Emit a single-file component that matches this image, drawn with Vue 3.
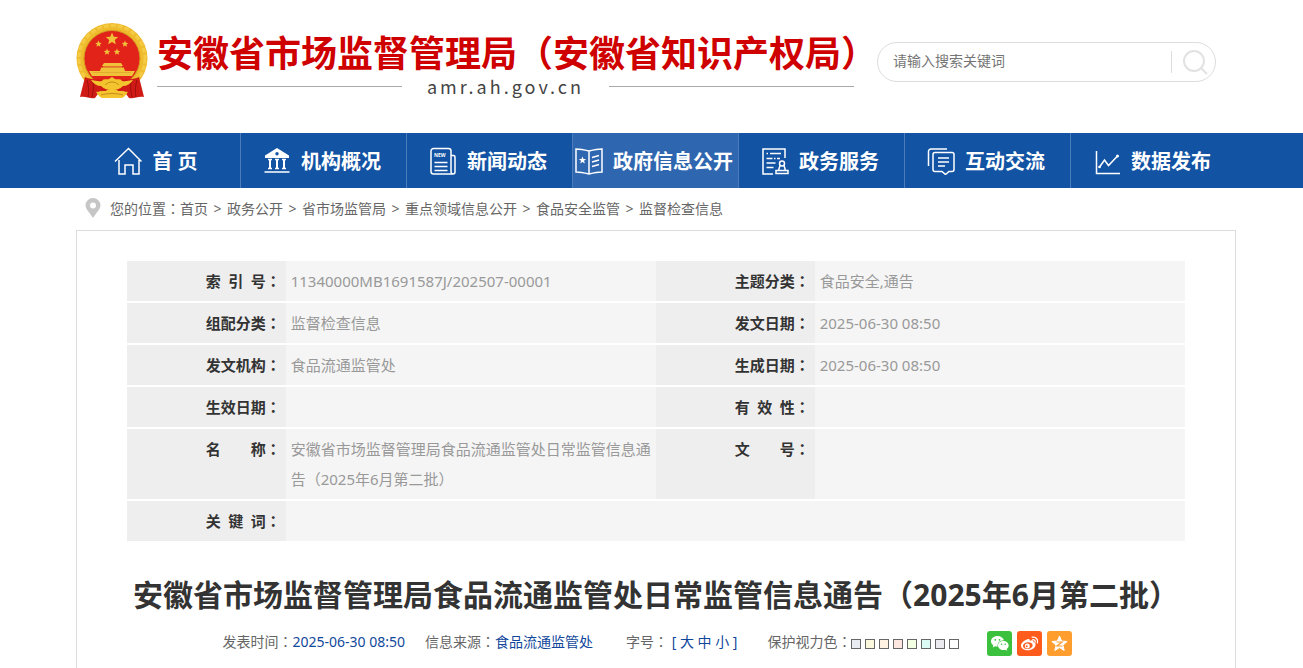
<template>
  <div class="page">
    <header class="wrap header">
      <svg class="emblem" viewBox="0 0 72 78" aria-hidden="true">
        <circle cx="36" cy="36.500" r="35.500" fill="#eebb2c" />
        <circle cx="36" cy="36.500" r="33" fill="none" stroke="#f5cb45" stroke-width="3" stroke-dasharray="5 2" />
        <circle cx="36" cy="36.500" r="28" fill="#e2231a" stroke="#d39a1f" stroke-width="1" />
        <g fill="#f0c23a">
          <polygon :points="star(36, 17, 6.5)" />
          <polygon :points="star(22.5, 22, 3.4)" />
          <polygon :points="star(49, 22, 3.4)" />
          <polygon :points="star(31, 30, 3.4)" />
          <polygon :points="star(41, 30, 3.4)" />
          <path d="M28 41h17l2 3H26zM27 44.500h19v1H27zM25 46h23l1 3h10l-3 5H16l-3-5h11z" />
        </g>
        <path d="M25 45.500h23M17 50.500h38" stroke="#dba02a" stroke-width=".6" />
        <path d="M9 55c6 3 12 2 18 3l9 5 9-5c6-1 12 0 18-3l5 20c-6-1-10 2-15 1l-5-7H24l-5 7c-5 1-9-2-15-1z" fill="#cf1a15" />
        <path d="M11 58c2 7 2 12 1 17M17 60c1 5 0 10-1 15M61 58c-2 7-2 12-1 17M55 60c-1 5 0 10 1 15" fill="none" stroke="#9e0f0f" stroke-width="1" />
        <path d="M15 58c4 0 7 2 11 1 2-3 5-1 7-2l3-2 3 2c2 1 5-1 7 2 4 1 7-1 11-1-3 4-6 6-10 6-3 3-7 4-11 4s-8-1-11-4c-4 0-7-2-10-6z" fill="#f3c42e" />
        <path d="M20 70c4-1 8 1 11-2l5-2 5 2c3 3 7 1 11 2-2 2-3 5-6 6H26c-3-1-4-4-6-6z" fill="#f3c42e" />
        <path d="M29 63c4-4 10-4 14 0M25 73c7-2 15-2 22 0" fill="none" stroke="#c88a18" stroke-width="1" />
      </svg>
      <div class="brand">
        <div class="brand-name">安徽省市场监督管理局（安徽省知识产权局）</div>
        <div class="brand-domain">amr.ah.gov.cn</div>
      </div>
      <form class="search" @submit.prevent>
        <input v-model="keyword" type="text" placeholder="请输入搜索关键词" aria-label="请输入搜索关键词" />
        <button type="submit" aria-label="搜索">
          <svg viewBox="0 0 26 26" fill="none" stroke="#e2e2e2" stroke-width="2">
            <circle cx="12" cy="12" r="10" />
            <path d="M19 19l6 6" />
          </svg>
        </button>
      </form>
    </header>

    <nav class="nav">
      <ul>
        <li v-for="item in navs" :key="item.name">
          <a href="#" :class="{ on: item.active }">
            <svg viewBox="0 0 28 28" aria-hidden="true" v-html="item.icon"></svg>
            <span>{{ item.name }}</span>
          </a>
        </li>
      </ul>
    </nav>

    <div class="wrap crumbs">
      <svg viewBox="0 0 16 20" aria-hidden="true">
        <path d="M8 0a7.500 7.500 0 0 1 7.500 7.500C15.500 11 11 15 8 20 5 15 .5 11 .5 7.500A7.500 7.500 0 0 1 8 0zm0 4.500a3 3 0 1 0 0 6 3 3 0 0 0 0-6z" fill="#c6c6c6" />
      </svg>
      <span>您的位置<i class="colon">：</i></span>
      <template v-for="(c, i) in crumbs" :key="c">
        <span v-if="i" class="sep">&gt;</span>
        <a href="#">{{ c }}</a>
      </template>
    </div>

    <main class="wrap panel">
      <table>
        <tbody>
          <tr v-for="(row, i) in rows" :key="i">
            <template v-for="cell in row" :key="cell[0]">
              <th scope="row"><span class="label">{{ cell[0] }}</span><i class="colon">：</i></th>
              <td :colspan="row.length === 1 ? 3 : 1">{{ cell[1] }}</td>
            </template>
          </tr>
        </tbody>
      </table>

      <h1>安徽省市场监督管理局食品流通监管处日常监管信息通告<i class="colon">（</i>2025年6月第二批<i class="colon">）</i></h1>

      <div class="meta">
        <span class="time">发表时间<i class="colon">：</i><b>2025-06-30 08:50</b></span>
        <span class="source">信息来源<i class="colon">：</i><b>食品流通监管处</b></span>
        <span class="size">字号<i class="colon">：</i> <b>[ <a href="#">大</a> <a href="#">中</a> <a href="#">小</a> ]</b></span>
        <span class="eye">保护视力色<i class="colon">：</i></span>
        <span class="swatches">
          <button v-for="c in colors" :key="c" type="button" :aria-label="c" :style="{ background: c }"></button>
        </span>
        <span class="share">
          <a href="#" aria-label="微信">
            <svg viewBox="0 0 25 25">
              <rect width="25" height="25" rx="3" fill="#3bc13d" />
              <path d="M10.500 5C6.900 5 4 7.300 4 10.300c0 1.700.9 3.100 2.400 4.100l-.7 2 2.500-1.200c.8.200 1.600.3 2.500.3-.7-3.600 2.400-6.400 6.200-6.300C16.200 6.700 13.600 5 10.500 5z" fill="#fff" />
              <path d="M16.300 9.900c-3 0-5.300 2-5.300 4.600s2.400 4.600 5.300 4.600c.7 0 1.300-.1 1.900-.3l2 1-.5-1.700c1.200-.9 2-2.100 2-3.600 0-2.600-2.500-4.600-5.400-4.600z" fill="#fff" />
              <g fill="#3bc13d"><circle cx="8.300" cy="8.800" r=".9" /><circle cx="12.500" cy="8.800" r=".9" /><circle cx="14.500" cy="13.200" r=".8" /><circle cx="18.200" cy="13.200" r=".8" /></g>
            </svg>
          </a>
          <a href="#" aria-label="微博">
            <svg viewBox="0 0 25 25">
              <rect width="25" height="25" rx="3" fill="#ff5b1c" />
              <path d="M10.500 8.200c1.300-.5 2.400-.1 2.200 1.500 1.800-.8 4-.9 3.700 1.300 1.600.4 2.300 1.400 2.200 2.700-.3 3-3.700 5.500-7.700 5.500-3.900 0-6.900-1.900-6.900-4.800 0-2.400 3.300-5.200 6.500-6.200z" fill="#fff" />
              <ellipse cx="10.800" cy="14.600" rx="4.900" ry="3.400" transform="rotate(-8 10.800 14.600)" fill="#ff5b1c" />
              <circle cx="10.300" cy="14.900" r="2.500" fill="#fff" />
              <circle cx="9.700" cy="15.300" r="1" fill="#ff5b1c" />
              <path d="M15.200 6.200c3.500-.8 6.300 2.200 5.200 5.700M15.800 8.600c1.600-.2 2.700 1 2.300 2.600" fill="none" stroke="#fff" stroke-width="1.300" stroke-linecap="round" />
            </svg>
          </a>
          <a href="#" aria-label="QQ空间">
            <svg viewBox="0 0 25 25">
              <rect width="25" height="25" rx="3" fill="#ff9d2e" />
              <polygon :points="star(12.5, 13, 8)" fill="#fff" stroke="#fff" stroke-width="1" stroke-linejoin="round" />
              <path d="M9.500 11h5.500l-5 4h5.500" fill="none" stroke="#ff9d2e" stroke-width="1.200" />
            </svg>
          </a>
        </span>
      </div>
    </main>
  </div>
</template>

<script setup>
import { ref } from 'vue';

const keyword = ref('');

// 五角星顶点
function star(cx, cy, r){
  const pts = [];
  for(let i = 0; i < 10; i++){
    const a = -Math.PI / 2 + i * Math.PI / 5;
    const d = i % 2 ? r * 0.45 : r;
    pts.push((cx + d * Math.cos(a)).toFixed(2) + ',' + (cy + d * Math.sin(a)).toFixed(2));
  }
  return pts.join(' ');
}

const navs = [
  { name: '首 页', icon: '<path d="M1 14.500 14.500 1.500 27.500 14.500M5 13v14h6v-9h8v9h6V13"/>' },
  { name: '机构概况', icon: '<path d="M14 1 2 8.500V11h24V8.500zM14 5a1.700 1.700 0 1 1 0 3.400A1.700 1.700 0 0 1 14 5z" fill="#fff" fill-rule="evenodd" stroke="none"/><path d="M5 12.500h4M12 12.500h4M19 12.500h4M5 21.500h4M12 21.500h4M19 21.500h4M1.500 25h25" /><path d="M7 12v10M14 12v10M21 12v10" stroke-width="2"/>' },
  { name: '新闻动态', icon: '<path d="M22 24V4a2.500 2.500 0 0 0-2.500-2.500h-15A2.500 2.500 0 0 0 2 4v20.500A2.500 2.500 0 0 0 4.500 27H24a2 2 0 0 0 2-2V10a1.500 1.500 0 0 0-1.500-1.500H22M22 24c0 2 1 3 2 3M5.500 15.500h13M5.500 19.500h13M5.500 23.500h13"/><text x="5" y="10" font-size="5" font-weight="700" fill="#fff" stroke="none">NEW</text>' },
  { name: '政府信息公开', active: true, icon: '<path d="M14 4C10 3 6 2 1 2v23c5 0 9 1 13 2 4-1 8-2 13-2V2c-5 0-9 1-13 2zv23M17 10.500l7-2M17 15l7-2M17 19.500l7-2"/><path d="M7.500 9.500l1 2.600h2.700L9 13.800l.9 2.700-2.400-1.600-2.300 1.600.8-2.700-2.200-1.700h2.700z" fill="#fff" stroke="none"/>' },
  { name: '政务服务', icon: '<path d="M12 27H2V2h22v9M5.500 6.500h1.500M9 6.500h11M5.500 11.500h6M13 11.500h1.500M16 11.500h3M5.500 16h9M5.500 20.500h7M19 18.500l-1.500 5M23 18.500l1.500 5M15 26.500v-3h12v3z"/><circle cx="21" cy="16.500" r="2.500"/>' },
  { name: '互动交流', icon: '<path d="M1.500 19V4.500A2.500 2.500 0 0 1 4 2h16M8 5.500h17a2 2 0 0 1 2 2v15a2 2 0 0 1-2 2h-3l-3.500 3-3.500-3H8a2 2 0 0 1-2-2v-15a2 2 0 0 1 2-2zM11 11h11M11 15h11M11 19h7"/>' },
  { name: '数据发布', icon: '<path d="M3.500 4v22.500H27M6.500 20l5-7 4 5.500L24.500 9"/><circle cx="6.500" cy="20" r="1.300" fill="#fff" stroke="none"/><circle cx="24.500" cy="9" r="1.500" fill="#fff" stroke="none"/>' }
];

const crumbs = ['首页', '政务公开', '省市场监管局', '重点领域信息公开', '食品安全监管', '监督检查信息'];

const rows = [
  [['索 引 号', '11340000MB1691587J/202507-00001'], ['主题分类', '食品安全,通告']],
  [['组配分类', '监督检查信息'], ['发文日期', '2025-06-30 08:50']],
  [['发文机构', '食品流通监管处'], ['生成日期', '2025-06-30 08:50']],
  [['生效日期', ''], ['有 效 性', '']],
  [['名 称', '安徽省市场监督管理局食品流通监管处日常监管信息通告（2025年6月第二批）'], ['文 号', '']],
  [['关 键 词', '']]
];

const colors = ['#e9ebf3', '#faf9de', '#fff2e2', '#fde6e0', '#f3ffe1', '#dafaf3', '#eaeaef', '#ffffff'];
</script>

<style>
body { margin:0; background:#fff; }
</style>

<style scoped>
.page { min-height:100vh; display:flex; flex-direction:column; padding-left:9px; box-sizing:border-box; overflow-x:hidden; font-family:"Noto Sans", "Noto Sans CJK SC", sans-serif; font-size:14px; color:#666; }
a { color:inherit; text-decoration:none; }
.colon { font-family:"Noto Sans CJK TC", sans-serif; font-style:normal; }
.wrap { width:100%; max-width:1160px; margin:0 auto; box-sizing:border-box; }

.header { height:133px; display:flex; align-items:flex-start; padding:22px 20px 0 0; }
.emblem { width:72px; height:78px; flex:none; margin-right:9px; }
.brand { flex:0 1 697px; min-width:0; padding-top:6px; }
.brand-name { font-family:"Noto Sans CJK SC", sans-serif; font-size:36px; font-weight:700; line-height:46px; color:#cf0000; white-space:nowrap; }
.brand-domain { display:flex; align-items:center; gap:25px; margin-top:2px; font-family:"Noto Sans CJK SC", sans-serif; font-size:18px; line-height:20px; letter-spacing:3px; color:#444; }
.brand-domain::before, .brand-domain::after { content:""; flex:1; height:1px; background:#aaa; }
.search { display:flex; align-items:center; width:339px; height:40px; margin:20px 0 0 auto; border:1px solid #ddd; border-radius:20px; box-sizing:border-box; }
.search input { flex:1; min-width:0; height:22px; padding:0 15px 3px; border:0; border-right:1px solid #ddd; box-sizing:border-box; background:none; outline:none; font:inherit; color:#666; }
.search input::placeholder { color:#757575; opacity:1; }
.search button { width:43px; height:26px; padding:0 10px; border:0; background:none; cursor:pointer; }
.search svg { display:block; width:26px; height:26px; }

.nav { margin-left:-9px; padding-left:9px; background:#1253a4; }
.nav ul { display:grid; grid-template-columns:repeat(7, 1fr); max-width:1162px; margin:0 auto; padding:0; list-style:none; }
.nav a { display:flex; align-items:center; justify-content:center; gap:10px; height:55px; padding-right:3px; border-right:1px solid #4c7dba; color:#fff; font-size:20px; font-weight:700; white-space:nowrap; }
.nav li:last-child a { border-right-color:transparent; }
.nav a.on { background:#2f66b0; }
.nav svg { flex:none; width:28px; height:28px; fill:none; stroke:#fff; stroke-width:1.500; }

.crumbs { display:flex; align-items:center; height:42px; padding:0 0 2px 9px; }
.crumbs svg { width:16px; height:20px; margin-right:9px; }
.crumbs .sep { width:9px; margin:0 5px; text-align:center; }

.panel { flex:1; padding:30px 50px 12px; border:1px solid #ddd; border-bottom:0; }
table { width:100%; table-layout:fixed; border-collapse:separate; border-spacing:0; font-size:15px; line-height:30px; }
th, td { padding:5px; border-bottom:2px solid #fff; vertical-align:top; }
th { width:15%; box-sizing:border-box; background:#eee; color:#333; text-align:right; white-space:nowrap; }
td { width:35%; box-sizing:border-box; background:#f5f5f5; color:#999; }
.label { display:inline-block; width:60px; text-align:justify; text-align-last:justify; }

h1 { margin:28px 0 0; font-size:30px; line-height:44px; font-weight:700; color:#333; text-align:center; }

.meta { display:flex; align-items:flex-start; justify-content:center; height:25px; margin-top:14px; padding-right:17px; line-height:20px; white-space:nowrap; }
.meta b { font-weight:400; color:#11479b; }
.source { margin-left:20px; }
.size { margin-left:33px; }
.eye { margin-left:30px; }
.swatches { display:flex; gap:4px; align-self:center; }
.swatches button { width:10px; height:10px; padding:0; border:1px solid #666; cursor:pointer; }
.share { display:flex; gap:5px; margin-left:28px; }
.share svg { display:block; width:25px; height:25px; }
</style>
